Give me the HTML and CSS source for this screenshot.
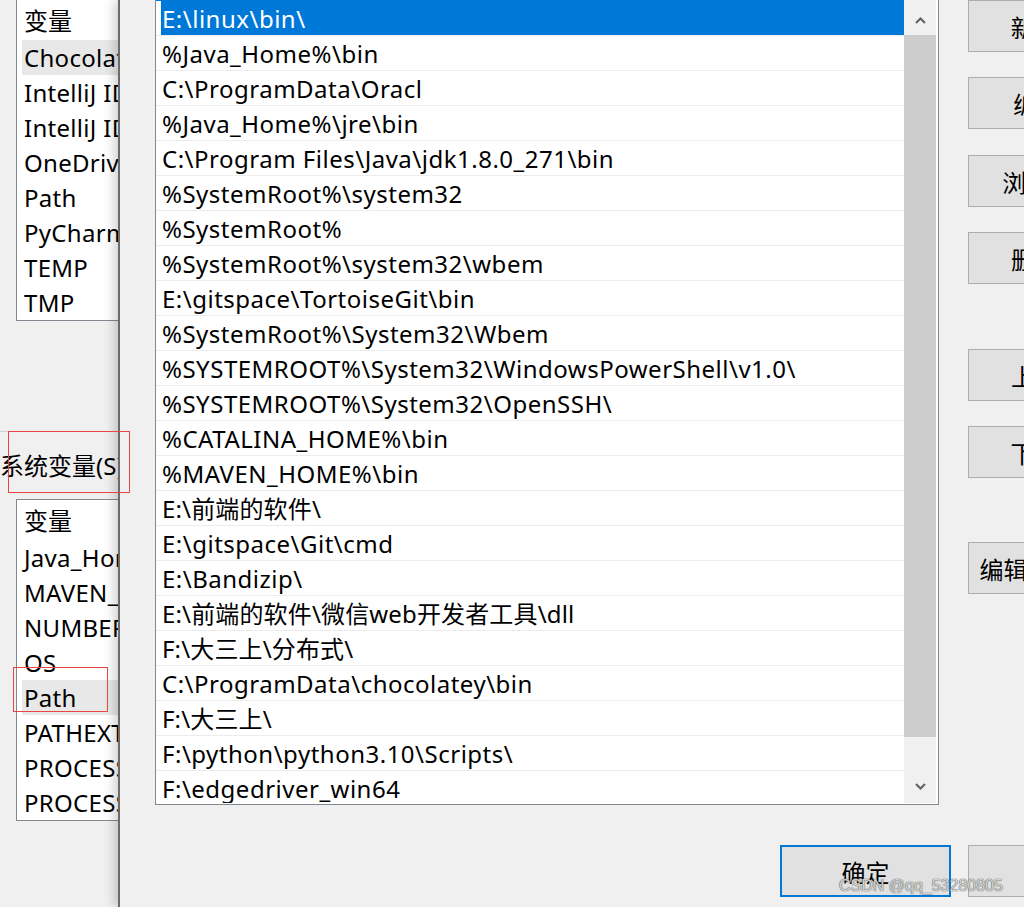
FILE: index.html
```html
<!DOCTYPE html>
<html lang="zh-CN">
<head>
<meta charset="utf-8">
<title>编辑环境变量</title>
<link rel="stylesheet" href="styles.css">
</head>
<body>
<div class="back-window">
  <div class="listview top">
    <div class="lv-header">变量</div>
    <div class="lv-row sel">ChocolateyLastPathUpdate</div>
    <div class="lv-row">IntelliJ IDEA</div>
    <div class="lv-row">IntelliJ IDEA Community Edition</div>
    <div class="lv-row">OneDrive</div>
    <div class="lv-row">Path</div>
    <div class="lv-row">PyCharm Community Edition</div>
    <div class="lv-row">TEMP</div>
    <div class="lv-row">TMP</div>
  </div>
  <div class="separator"></div>
  <div class="group-label">系统变量(S)</div>
  <div class="listview">
    <div class="lv-header">变量</div>
    <div class="lv-row">Java_Home</div>
    <div class="lv-row">MAVEN_HOME</div>
    <div class="lv-row">NUMBER_OF_PROCESSORS</div>
    <div class="lv-row">OS</div>
    <div class="lv-row sel">Path</div>
    <div class="lv-row">PATHEXT</div>
    <div class="lv-row">PROCESSOR_ARCHITECTURE</div>
    <div class="lv-row">PROCESSOR_IDENTIFIER</div>
  </div>
</div>

<div class="front-window">
  <div class="pathlist">
    <div class="rows">
      <div class="row sel">E:\linux\bin\</div>
      <div class="row">%Java_Home%\bin</div>
      <div class="row">C:\ProgramData\Oracl</div>
      <div class="row">%Java_Home%\jre\bin</div>
      <div class="row">C:\Program Files\Java\jdk1.8.0_271\bin</div>
      <div class="row">%SystemRoot%\system32</div>
      <div class="row">%SystemRoot%</div>
      <div class="row">%SystemRoot%\system32\wbem</div>
      <div class="row">E:\gitspace\TortoiseGit\bin</div>
      <div class="row">%SystemRoot%\System32\Wbem</div>
      <div class="row">%SYSTEMROOT%\System32\WindowsPowerShell\v1.0\</div>
      <div class="row">%SYSTEMROOT%\System32\OpenSSH\</div>
      <div class="row">%CATALINA_HOME%\bin</div>
      <div class="row">%MAVEN_HOME%\bin</div>
      <div class="row mixed">E:\前端的软件\</div>
      <div class="row">E:\gitspace\Git\cmd</div>
      <div class="row">E:\Bandizip\</div>
      <div class="row mixed">E:\前端的软件\微信web开发者工具\dll</div>
      <div class="row mixed">F:\大三上\分布式\</div>
      <div class="row">C:\ProgramData\chocolatey\bin</div>
      <div class="row mixed">F:\大三上\</div>
      <div class="row">F:\python\python3.10\Scripts\</div>
      <div class="row">F:\edgedriver_win64</div>
    </div>
    <div class="scrollbar">
      <div class="sb-btn up"><svg width="11" height="7" viewBox="0 0 11 7"><polyline points="1,6 5.5,1.5 10,6" fill="none" stroke="#606060" stroke-width="2"/></svg></div>
      <div class="sb-thumb"></div>
      <div class="sb-track"></div>
      <div class="sb-btn down"><svg width="11" height="7" viewBox="0 0 11 7"><polyline points="1,1 5.5,5.5 10,1" fill="none" stroke="#606060" stroke-width="2"/></svg></div>
    </div>
  </div>
  <div class="side">
    <button class="btn">新建(N)</button>
    <button class="btn">编辑(E)</button>
    <button class="btn b3">浏览(B)...</button>
    <button class="btn">删除(D)</button>
    <button class="btn group">上移(U)</button>
    <button class="btn">下移(O)</button>
    <button class="btn group2">编辑文本(T)...</button>
  </div>
  <div class="footer">
    <button class="btn ok">确定</button>
    <button class="btn cancel">取消</button>
  </div>
</div>

<div class="mark mark-group"></div>
<div class="mark mark-path"></div>
<div class="watermark">CSDN @qq_53280805</div>
</body>
</html>
```
FILE: styles.css
```css
* { box-sizing: border-box; }
html, body {
  margin: 0;
  padding: 0;
  width: 1024px;
  height: 907px;
  overflow: hidden;
}
body {
  position: relative;
  background: #f0f0f0;
  font-family: "Noto Sans", "Noto Sans CJK SC", sans-serif;
  font-size: 24px;
  color: #000;
}

/* back window (environment variables) */
.back-window {
  position: absolute;
  left: 0;
  top: 0;
  width: 320px;
  height: 907px;
  padding-left: 16px;
}
.listview {
  width: 300px;
  background: #fff;
  border: 1px solid #828790;
  overflow: hidden;
}
.listview.top { margin-top: -1px; }
.lv-header {
  height: 40px;
  line-height: 41px;
  padding-left: 7px;
}
.lv-row {
  height: 35px;
  line-height: 35px;
  margin-left: 5px;
  padding-left: 2px;
  white-space: nowrap;
  letter-spacing: 0.3px;
}
.lv-row.sel { background: #e8e8e8; }
.separator {
  margin: 110px 0 0 -16px;
  width: 140px;
  border-top: 1px solid #d0d0d0;
}
.group-label {
  height: 67px;
  line-height: 67px;
  margin-left: -16px;
  white-space: nowrap;
}

/* front window (edit path) */
.front-window {
  position: absolute;
  left: 118px;
  top: 0;
  width: 1040px;
  height: 907px;
  background: #f0f0f0;
  border-left: 2px solid #6b6b6b;
  box-shadow: -4px 0 10px rgba(0, 0, 0, 0.18);
  padding-left: 35px;
  display: grid;
  grid-template-columns: 784px 166px;
  column-gap: 29px;
  align-content: start;
}
.pathlist {
  margin-top: -1px;
  height: 806px;
  border: 1px solid #828790;
  background: #fff;
  display: flex;
  padding: 0 2px 1px 0;
}
.rows {
  width: 748px;
  overflow: hidden;
}
.row {
  height: 35px;
  line-height: 35px;
  border-top: 1px solid #ececec;
  padding-left: 6px;
  white-space: nowrap;
  letter-spacing: 0.5px;
}
.row.mixed { letter-spacing: 0.15px; }
.row.sel {
  border-top-color: #0078d7;
  background: linear-gradient(to right, #fff 5px, #0078d7 5px);
  color: #fff;
}
.scrollbar {
  width: 32px;
  background: #f0f0f0;
  display: flex;
  flex-direction: column;
}
.sb-btn {
  height: 35px;
  display: flex;
  justify-content: center;
  align-items: center;
}
.sb-btn.up { padding-top: 5px; }
.sb-btn.down { padding-top: 1px; }
.sb-btn svg { display: block; }
.sb-thumb {
  height: 702px;
  background: #cdcdcd;
}
.sb-track { flex: 1; }

.side {
  display: flex;
  flex-direction: column;
}
.btn {
  height: 52px;
  margin: 0;
  padding: 0;
  background: #e1e1e1;
  border: 1px solid #adadad;
  border-radius: 0;
  font: inherit;
  color: #000;
  white-space: nowrap;
  display: flex;
  align-items: center;
  justify-content: center;
  overflow: hidden;
}
.side .btn + .btn { margin-top: 25px; }
.side .btn.b3 { margin-top: 26px; }
.side .btn.group { margin-top: 65px; }
.side .btn.group2 { margin-top: 64px; }

.footer {
  grid-column: 1 / -1;
  margin-top: 40px;
  display: flex;
  justify-content: flex-end;
  gap: 17px;
}
.btn.ok {
  width: 171px;
  border: 2px solid #0078d7;
}
.btn.cancel { width: 166px; }

/* annotations drawn over the screenshot */
.mark {
  position: absolute;
  border: 1px solid #e84545;
  z-index: 10;
}
.mark-group { left: 8px; top: 431px; width: 122px; height: 62px; }
.mark-path { left: 13px; top: 667px; width: 95px; height: 45px; }
.watermark {
  position: absolute;
  left: 839px;
  top: 877px;
  z-index: 11;
  font-family: "Liberation Sans", Arial, sans-serif;
  font-size: 16px;
  color: rgba(235, 235, 235, 0.85);
  text-shadow: 0 0 1px #555, 0 0 1px #555;
  white-space: nowrap;
}
```
